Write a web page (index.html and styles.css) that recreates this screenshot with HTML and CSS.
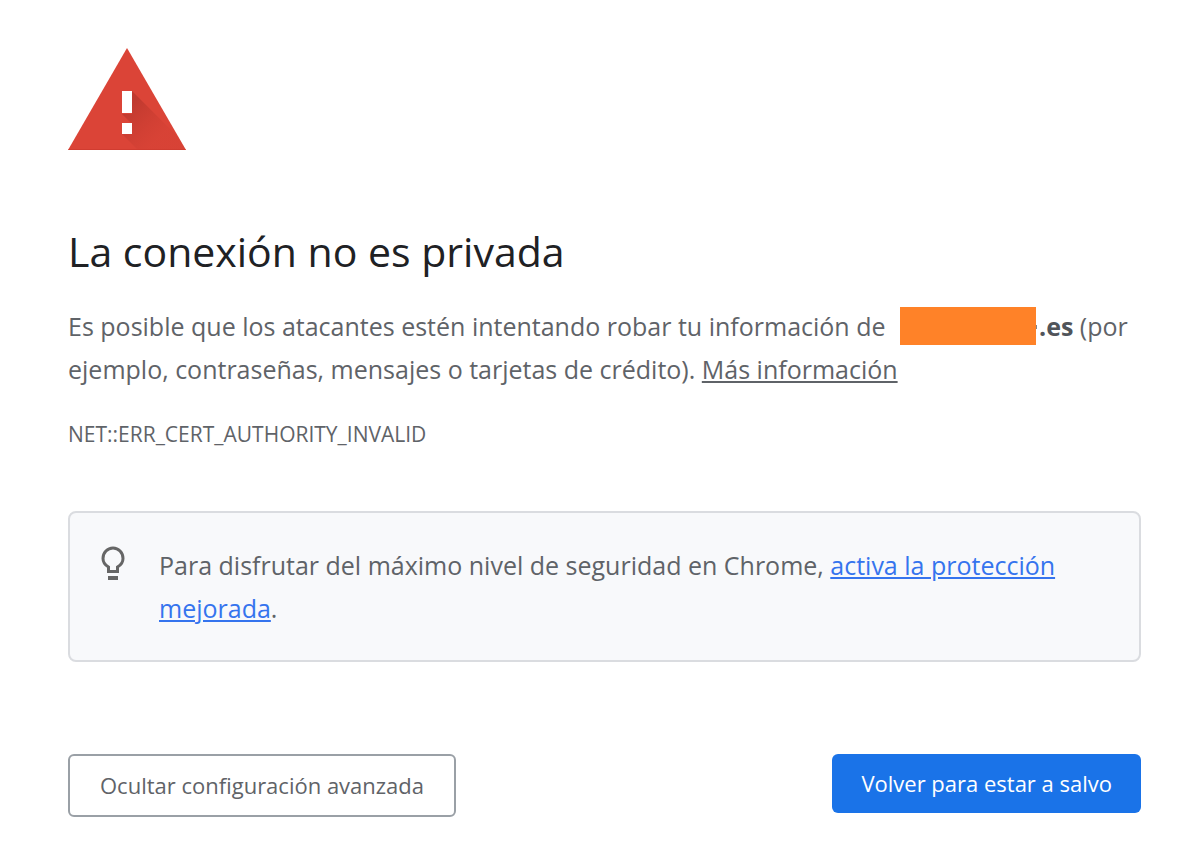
FILE: index.html
```html
<!DOCTYPE html>
<html lang="es">
<head>
<meta charset="utf-8">
<title>Error de privacidad</title>
<link rel="stylesheet" href="styles.css">
</head>
<body>
<main class="page">
  <svg class="warning" viewBox="0 0 118 103" aria-hidden="true">
    <defs>
      <linearGradient id="shade" gradientUnits="userSpaceOnUse" x1="58" y1="62" x2="88" y2="92">
        <stop offset="0" stop-color="#a52f27" stop-opacity=".5"/>
        <stop offset="1" stop-color="#c5392e" stop-opacity=".15"/>
      </linearGradient>
    </defs>
    <path fill="#db4437" d="M59 0 118 102H0z"/>
    <path fill="url(#shade)" d="M64 43 110 89 118 102H70L54 86H64V76L54 66H64z"/>
    <path fill="#d03c30" d="M1 101h116l1 1H0z"/>
    <path fill="#fff" d="M54 43h10v22H54zM54 75h10v11H54z"/>
  </svg>
  <h1 class="title">La conexión no es privada</h1>
  <p class="message">Es posible que los atacantes estén intentando robar tu información de <span class="redacted"></span><strong>.es</strong> (por ejemplo, contraseñas, mensajes o tarjetas de crédito). <a class="more" href="#">Más información</a></p>
  <p class="code">NET::ERR_CERT_AUTHORITY_INVALID</p>
  <section class="tip">
    <svg class="bulb" viewBox="0 0 24 36" aria-hidden="true">
      <path fill="none" stroke="#666" stroke-width="3" d="M7.500 25.500v-4.500C4 19 2 16 2 12.500a10 10.500 0 0 1 20 0c0 3.500-2 6.500-5.500 8.500v4.500z"/>
      <path fill="#666" d="M7 30h10v4H7z"/>
    </svg>
    <p class="tip-text">Para disfrutar del máximo nivel de seguridad en Chrome, <a class="enable" href="#">activa la protección mejorada</a>.</p>
  </section>
  <div class="actions">
    <button class="btn secondary" type="button">Ocultar configuración avanzada</button>
    <button class="btn primary" type="button">Volver para estar a salvo</button>
  </div>
</main>
</body>
</html>
```
FILE: styles.css
```css
* { box-sizing: border-box; }
body { margin: 0; background: #fff; color: #5f6368; font-family: "Open Sans", "Noto Sans", sans-serif; font-size: 25px; line-height: 43px; }
.page { padding: 48px 59px 40px 68px; }
.warning { display: block; width: 118px; height: 103px; }
.title { margin: 72px 0 0; color: #202124; font-size: 41px; font-weight: 400; line-height: 56px; }
.message { margin: 26px 0 0; }
.redacted { position: relative; display: inline-block; width: 136px; height: 38px; margin: 0 3px 0 8px; background: #ff8228; vertical-align: -9px; }
/* edge of the covered letter */
.redacted::after { content: ""; position: absolute; top: 18px; left: 100%; width: 1px; height: 4px; background: #80868b; }
strong { color: #50545a; }
.more { color: inherit; }
.code { margin: 22px 0 0; font-size: 21px; }
.tip { display: flex; gap: 34px; margin-top: 55px; padding: 31px 31px 30px; border: 2px solid #dadce0; border-radius: 8px; background: #f8f9fb; }
.bulb { flex: none; width: 24px; height: 36px; margin-top: 2px; }
.tip-text { margin: 0; }
.enable { color: #3574ee; }
.actions { display: flex; justify-content: space-between; align-items: flex-start; margin-top: 92px; }
.btn { border-radius: 6px; font: inherit; font-size: 22px; line-height: 29px; }
.secondary { padding: 15px 30px; border: 2px solid #9aa0a6; background: #fff; color: #5f6368; }
.primary { padding: 15px 29px; border: 0; background: #1a73e8; color: #fff; }
```
